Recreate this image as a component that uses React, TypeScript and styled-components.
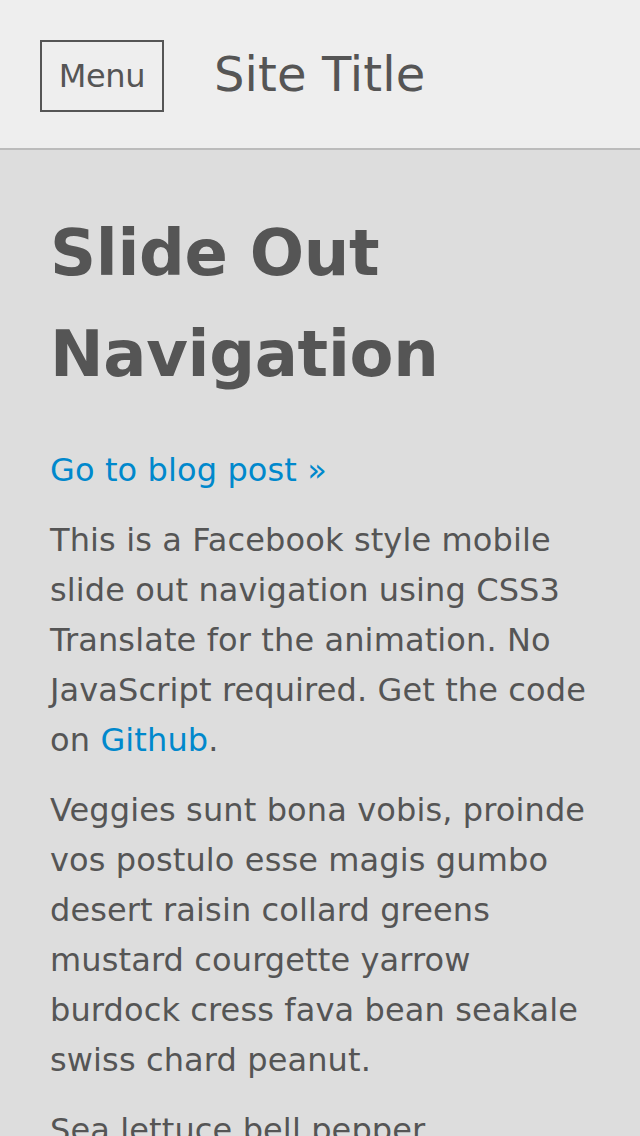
import React from "react";
import styled, { createGlobalStyle } from "styled-components";

const GlobalStyle = createGlobalStyle`
  html, body {
    margin: 0;
    padding: 0;
    background: #dddddd;
  }
  body {
    font-family: "DejaVu Sans", Verdana, sans-serif;
    color: #555555;
  }
  * { box-sizing: border-box; }
`;

const Page = styled.div`
  min-height: 100vh;
  background: #dddddd;
`;

const Header = styled.header`
  display: flex;
  align-items: center;
  height: 150px;
  padding: 40px 40px 36px;
  background: #eeeeee;
  border-bottom: 2px solid #bbbbbb;
`;

const MenuButton = styled.a`
  display: flex;
  align-items: center;
  justify-content: center;
  width: 124px;
  height: 72px;
  border: 2px solid #555555;
  color: #555555;
  font-size: 32px;
  line-height: normal;
  letter-spacing: -0.3px;
  text-decoration: none;
  cursor: pointer;
`;

const SiteTitle = styled.h1`
  margin: -4px 0 0 50px;
  font-size: 48px;
  font-weight: normal;
  line-height: normal;
  letter-spacing: 0.1px;
  color: #555555;
`;

const Content = styled.main`
  padding: 53px 50px 40px;
`;

const Heading = styled.h2`
  margin: 0 0 40px;
  font-size: 64px;
  font-weight: bold;
  line-height: 101px;
  letter-spacing: -0.3px;
  color: #555555;
`;

const Para = styled.p`
  margin: 0 0 20px;
  font-size: 32px;
  line-height: 50px;
  letter-spacing: 0.12px;
  color: #555555;
`;

const Link = styled.a`
  color: #0088cc;
  text-decoration: none;
`;

export default function App() {
  return (
    <Page>
      <GlobalStyle />
      <Header>
        <MenuButton>Menu</MenuButton>
        <SiteTitle>Site Title</SiteTitle>
      </Header>
      <Content>
        <Heading>Slide Out Navigation</Heading>
        <Para>
          <Link href="#">Go to blog post »</Link>
        </Para>
        <Para>
          This is a Facebook style mobile slide out navigation using CSS3
          Translate for the animation. No JavaScript required. Get the code on{" "}
          <Link href="#">Github</Link>.
        </Para>
        <Para>
          Veggies sunt bona vobis, proinde vos postulo esse magis gumbo desert
          raisin collard greens mustard courgette yarrow burdock cress fava bean
          seakale swiss chard peanut.
        </Para>
        <Para>
          Sea lettuce bell pepper cauliflower kohlrabi okra turnip greens
          salsify wattle seed spinach radish lentil.
        </Para>
      </Content>
    </Page>
  );
}
